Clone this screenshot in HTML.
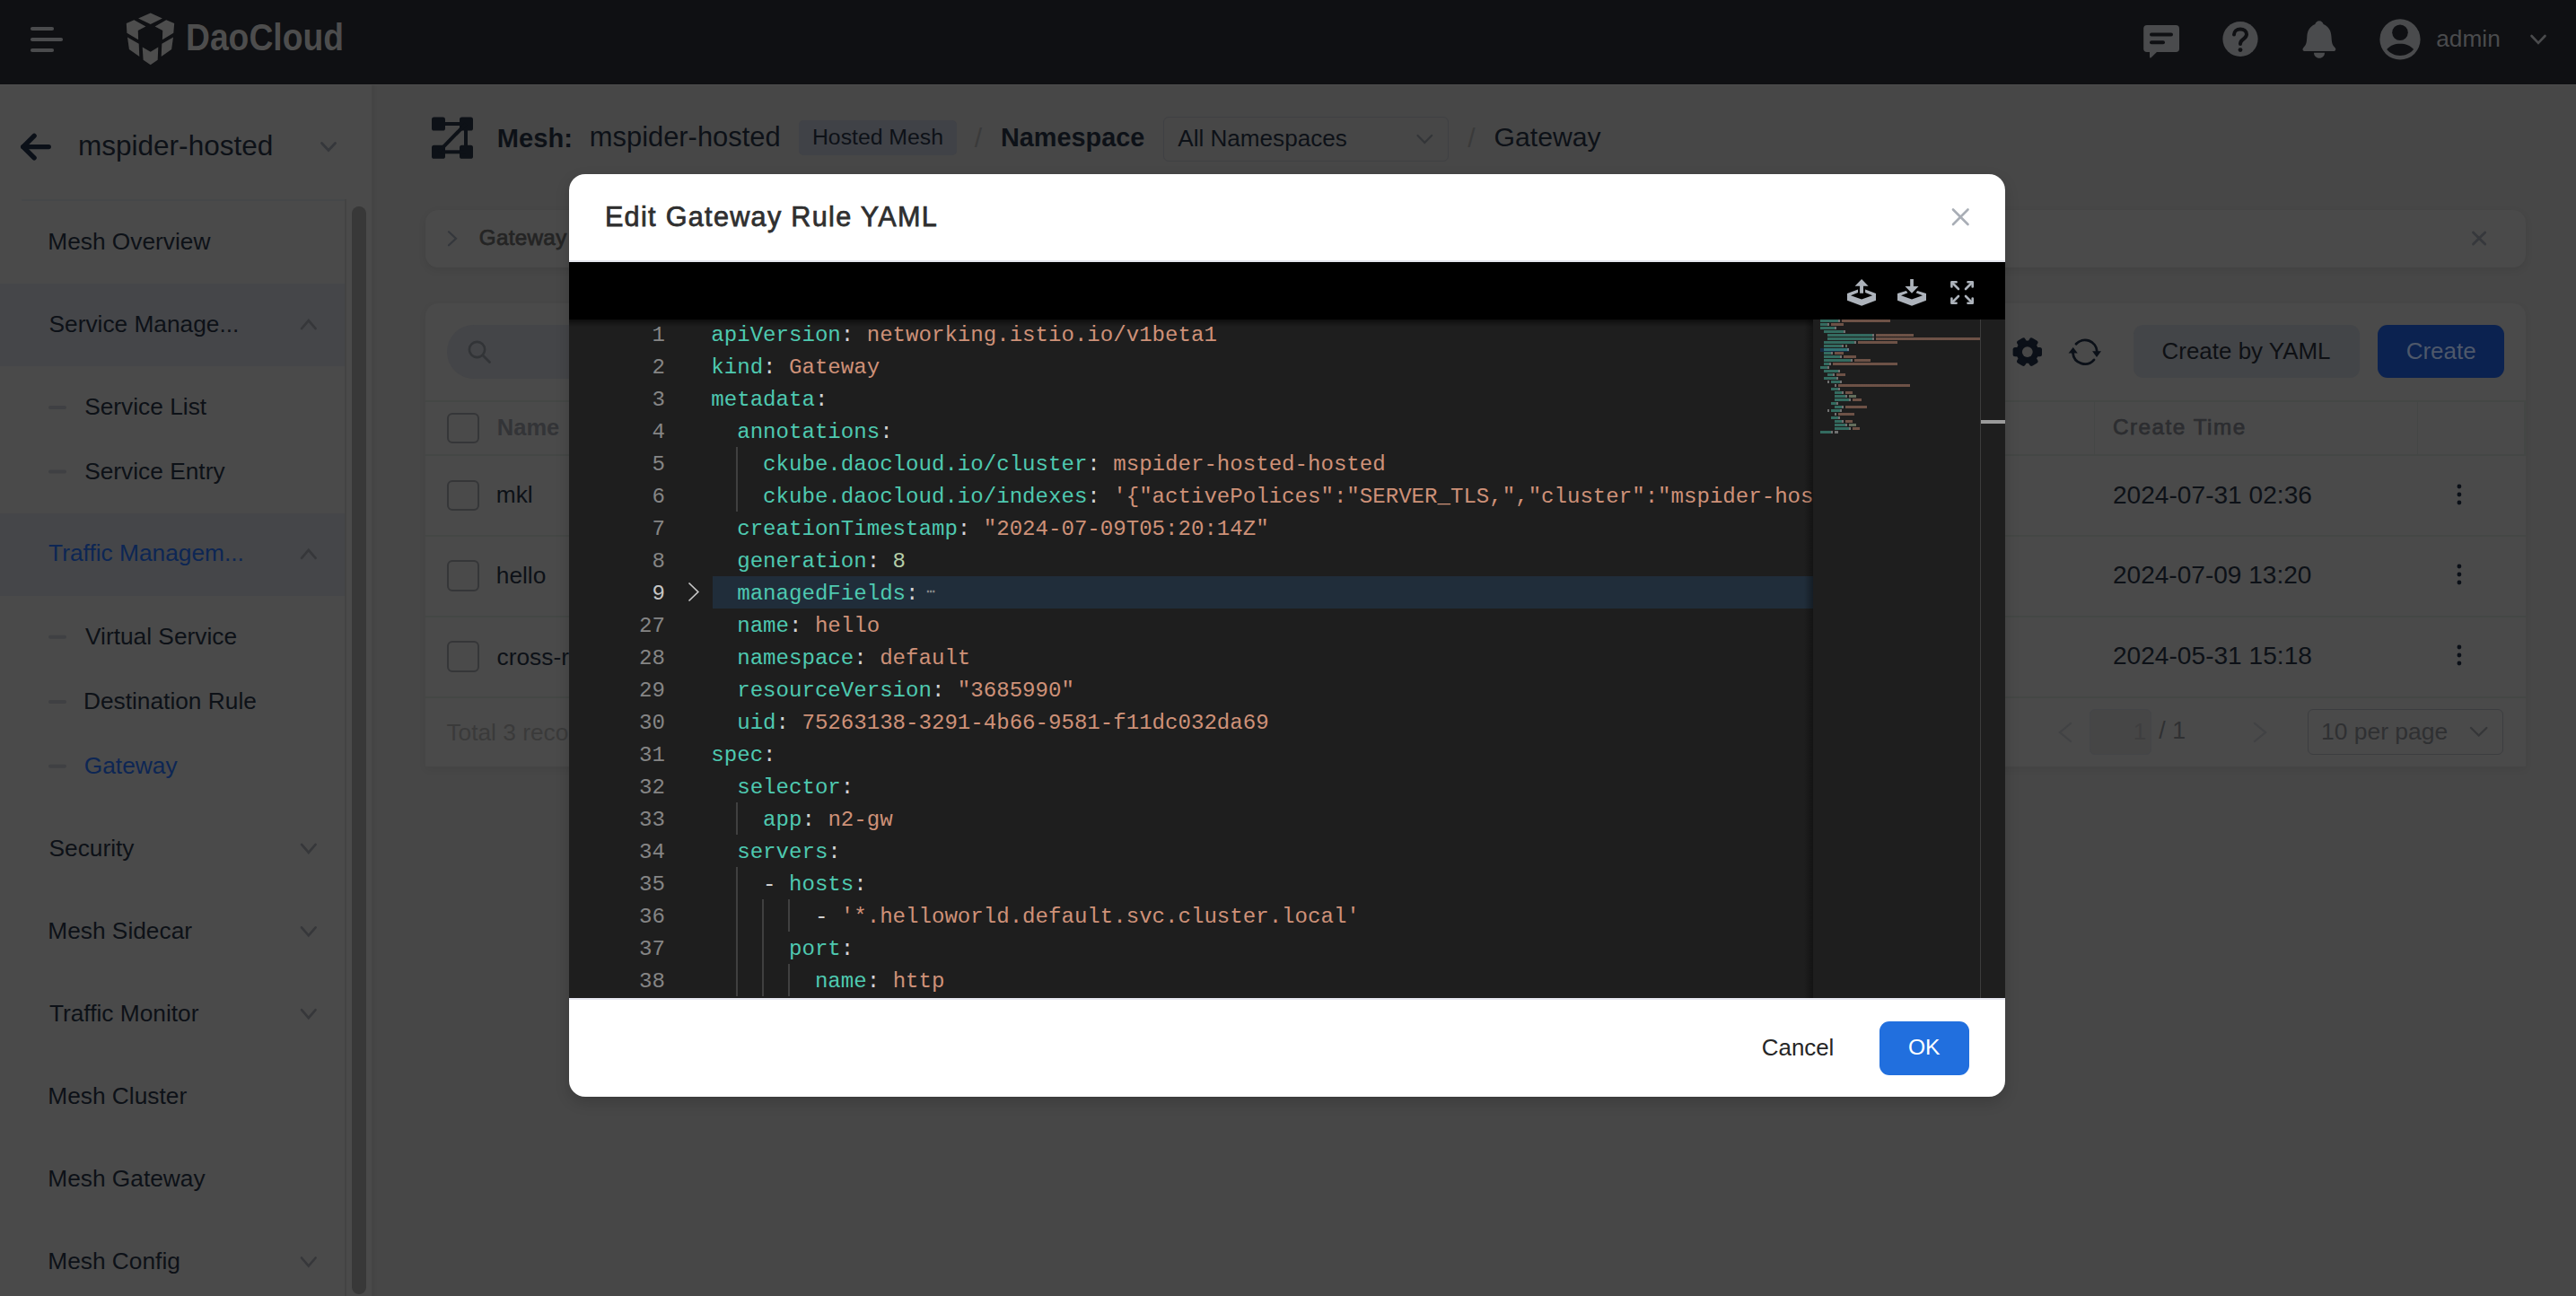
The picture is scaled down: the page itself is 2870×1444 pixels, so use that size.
<!DOCTYPE html>
<html><head><meta charset="utf-8"><title>Edit Gateway Rule YAML</title><style>
html,body{margin:0;padding:0;width:2870px;height:1444px;overflow:hidden;background:#474747;position:relative}
.t{position:absolute;white-space:pre}
.cl{position:absolute;white-space:pre;font-family:'Liberation Mono',monospace;font-size:24.08px;line-height:36px;margin-top:1.58px}
.ln{position:absolute;left:0;width:107px;text-align:right;font-family:'Liberation Mono',monospace;font-size:24.08px;line-height:36px;margin-top:1.58px}
</style></head>
<body>
<div style="position:absolute;left:0;top:0;width:2870px;height:94px;background:#0f1013"></div>
<svg style="position:absolute;left:0;top:0" width="420" height="94">
<g stroke="#4a4b4d" stroke-width="4.2" stroke-linecap="round">
<line x1="36" y1="32" x2="58" y2="32"/><line x1="36" y1="44" x2="68" y2="44"/><line x1="36" y1="56" x2="58" y2="56"/></g>
<g fill="#4d4d4d">
<polygon points="167.7,14.6 180.9,20.4 167.7,26.9 154.1,20.4"/>
<polygon points="140.8,26 149.4,22.3 162.4,29.4 153.8,34 154.1,44.2 141.4,36.8"/>
<polygon points="194.2,26 185.2,22.3 172.6,29.4 181.2,34 180.9,44.2 193.3,36.8"/>
<polygon points="142,41.4 154.7,48.8 155.3,63 143.9,55"/>
<polygon points="193,41.4 180.3,48.8 179.7,63 191.1,55"/>
<polygon points="158.7,52.5 167.7,57.8 176.3,52.5 175.7,66.7 167.7,72.3 159.6,66.7"/>
</g></svg>
<svg style="position:absolute;left:2370px;top:0" width="500" height="94" viewBox="2370 0 500 94">
<g fill="#4a4b4d">
<rect x="2388.2" y="28" width="39.8" height="30" rx="3.8"/>
<path d="M2395,56 L2395,63.2 Q2395,65.5 2396.8,63.9 L2405,56 Z"/>
<circle cx="2496" cy="43.5" r="19.6"/>
<path d="M2584,23.2 C2581.4,23.2 2580,25 2579.3,27 C2573,29.5 2570.5,35 2570.3,41 C2570,47 2569.5,50 2566.4,53 C2564.8,54.6 2565.4,57 2567.8,57 L2600,57 C2602.4,57 2603,54.6 2601.4,53 C2598.3,50 2597.8,47 2597.5,41 C2597.3,35 2594.8,29.5 2588.6,27 C2587.9,25 2586.5,23.2 2584,23.2 Z"/>
<path d="M2578,58.8 L2590,58.8 C2590,62.4 2587.4,64.8 2584,64.8 C2580.6,64.8 2578,62.4 2578,58.8 Z"/>
<circle cx="2674" cy="43.9" r="22.6"/>
</g>
<g stroke="#0f1013" stroke-width="4" stroke-linecap="round" fill="none">
<line x1="2397" y1="38.6" x2="2419" y2="38.6"/><line x1="2397" y1="47.3" x2="2410" y2="47.3"/>
<path d="M2489,38.6 C2489,35 2492,32.4 2496,32.4 C2500,32.4 2503,35 2503,38.3 C2503,41.3 2500.5,42.8 2498.5,44.3 C2496.5,45.8 2496,47 2496,49"/>
</g>
<circle cx="2496" cy="55.6" r="2.4" fill="#0f1013"/>
<circle cx="2674" cy="36.3" r="8.8" fill="#0f1013"/>
<path d="M2659.2,55.1 C2663,50.5 2668,48.7 2674,48.7 C2680,48.7 2685.3,50.5 2689.1,55.1 C2685.5,59.5 2680,62 2674,62 C2668,62 2662.7,59.5 2659.2,55.1 Z" fill="#0f1013"/>
<polyline points="2820.5,40 2828,47.8 2835.5,40" stroke="#4a4b4d" stroke-width="2.6" fill="none" stroke-linecap="round"/>
</svg>
<div style="position:absolute;left:0;top:94px;width:414px;height:1350px;background:#4a4a4a"></div>
<div style="position:absolute;left:414px;top:94px;width:2456px;height:1350px;background:#474747"></div>
<div style="position:absolute;left:414px;top:94px;width:3px;height:1350px;background:#444444"></div><div style="position:absolute;left:417px;top:94px;width:3px;height:1350px;background:#464646"></div><div style="position:absolute;left:0;top:94px;width:2870px;height:1px;background:#4e4e4e"></div>
<div style="position:absolute;left:0;top:316px;width:385px;height:92px;background:#454649"></div>
<div style="position:absolute;left:0;top:572px;width:385px;height:92px;background:#454649"></div>
<div style="position:absolute;left:24px;top:222px;width:361px;height:2px;background:#454749"></div>
<div style="position:absolute;left:384px;top:222px;width:2px;height:1222px;background:#434343"></div>
<div style="position:absolute;left:392px;top:230px;width:16px;height:1212px;border-radius:8px;background:#383838"></div>
<svg style="position:absolute;left:0;top:120px" width="414" height="100" viewBox="0 120 414 100">
<g stroke="#0b1018" stroke-width="5.4" stroke-linecap="round" stroke-linejoin="round" fill="none">
<polyline points="38.1,151.3 25.8,163.6 38.1,175.9"/><line x1="25.8" y1="163.6" x2="54.2" y2="163.6"/></g>
<polyline points="358.5,159.5 366,167.5 373.5,159.5" stroke="#35373b" stroke-width="2.8" fill="none" stroke-linecap="round"/>
</svg>
<svg style="position:absolute;left:0;top:0" width="414" height="1444">
<polyline points="336,366.09999999999997 343.8,357.09999999999997 351.6,366.09999999999997" stroke="#36373a" stroke-width="2.6" fill="none" stroke-linecap="round"/>
<line x1="56" y1="454.0" x2="72" y2="454.0" stroke="#3f4043" stroke-width="4" stroke-linecap="round"/>
<line x1="56" y1="525.5" x2="72" y2="525.5" stroke="#3f4043" stroke-width="4" stroke-linecap="round"/>
<polyline points="336,621.8000000000001 343.8,612.8000000000001 351.6,621.8000000000001" stroke="#36373a" stroke-width="2.6" fill="none" stroke-linecap="round"/>
<line x1="56" y1="709.8000000000001" x2="72" y2="709.8000000000001" stroke="#3f4043" stroke-width="4" stroke-linecap="round"/>
<line x1="56" y1="782.0" x2="72" y2="782.0" stroke="#3f4043" stroke-width="4" stroke-linecap="round"/>
<line x1="56" y1="853.7" x2="72" y2="853.7" stroke="#3f4043" stroke-width="4" stroke-linecap="round"/>
<polyline points="336,940.9000000000001 343.8,949.9000000000001 351.6,940.9000000000001" stroke="#36373a" stroke-width="2.6" fill="none" stroke-linecap="round"/>
<polyline points="336,1033.3 343.8,1042.3 351.6,1033.3" stroke="#36373a" stroke-width="2.6" fill="none" stroke-linecap="round"/>
<polyline points="336,1125.2 343.8,1134.2 351.6,1125.2" stroke="#36373a" stroke-width="2.6" fill="none" stroke-linecap="round"/>
<polyline points="336,1401.5 343.8,1410.5 351.6,1401.5" stroke="#36373a" stroke-width="2.6" fill="none" stroke-linecap="round"/>
</svg>
<svg style="position:absolute;left:470px;top:120px" width="70" height="70" viewBox="470 120 70 70">
<g fill="#0d1117"><rect x="481" y="130.6" width="15" height="15" rx="2.6"/><rect x="512" y="130.6" width="15" height="15" rx="2.6"/>
<rect x="481" y="161.8" width="15" height="15" rx="2.6"/><rect x="512" y="161.8" width="15" height="15" rx="2.6"/></g>
<g stroke="#0d1117" stroke-width="4" fill="none"><line x1="490" y1="138" x2="519" y2="138"/><line x1="490" y1="169.3" x2="519" y2="169.3"/>
<line x1="519" y1="138" x2="519" y2="169"/><line x1="519" y1="138" x2="488.5" y2="169.3"/></g></svg>
<div style="position:absolute;left:890px;top:134.2px;width:176px;height:39.3px;border-radius:5px;background:#404247"></div>
<div style="position:absolute;left:1295.7px;top:129.5px;width:318.4px;height:50.5px;box-sizing:border-box;border:1.6px solid #3f4043;border-radius:6px"></div>
<svg style="position:absolute;left:1570px;top:140px" width="40" height="30" viewBox="1570 140 40 30"><polyline points="1579.5,151 1587.3,159 1595.1,151" stroke="#333538" stroke-width="2.2" fill="none" stroke-linecap="round"/></svg>
<div style="position:absolute;left:474px;top:234px;width:2340px;height:64px;border-radius:14px;background:#4a4a4a;box-shadow:0 3px 8px rgba(0,0,0,0.08)"></div>
<svg style="position:absolute;left:490px;top:250px" width="30" height="30" viewBox="490 250 30 30"><polyline points="500,258.3 508,265.8 500,273.3" stroke="#34373c" stroke-width="2.2" fill="none" stroke-linecap="round"/></svg>
<svg style="position:absolute;left:2740px;top:245px" width="40" height="40" viewBox="2740 245 40 40"><g stroke="#36383c" stroke-width="2.8" stroke-linecap="round"><line x1="2755.5" y1="259" x2="2768.7" y2="272"/><line x1="2768.7" y1="259" x2="2755.5" y2="272"/></g></svg>
<div style="position:absolute;left:474px;top:338px;width:2340px;height:515.5px;border-radius:14px 14px 0 0;background:#4a4a4a;box-shadow:0 3px 8px rgba(0,0,0,0.06)"></div>
<div style="position:absolute;left:497.8px;top:361.7px;width:400px;height:60.2px;border-radius:30px;background:#444548"></div>
<svg style="position:absolute;left:515px;top:372px" width="40" height="40" viewBox="515 372 40 40"><circle cx="531.5" cy="389.5" r="8.6" stroke="#323437" stroke-width="2.6" fill="none"/><line x1="538" y1="396" x2="545.5" y2="403.5" stroke="#323437" stroke-width="2.8" stroke-linecap="round"/></svg>
<div style="position:absolute;left:474px;top:446px;width:2340px;height:2px;background:#444745"></div>
<div style="position:absolute;left:474px;top:506px;width:2340px;height:2px;background:#444745"></div>
<div style="position:absolute;left:474px;top:596px;width:2340px;height:2px;background:#444745"></div>
<div style="position:absolute;left:474px;top:686px;width:2340px;height:2px;background:#444745"></div>
<div style="position:absolute;left:474px;top:776px;width:2340px;height:2px;background:#444745"></div>
<div style="position:absolute;left:2332.5px;top:446px;width:1.5px;height:61px;background:#444745"></div>
<div style="position:absolute;left:2692.5px;top:446px;width:1.5px;height:61px;background:#444745"></div>
<div style="position:absolute;left:2812.3px;top:446px;width:1.5px;height:61px;background:#444745"></div>
<div style="position:absolute;left:498.3px;top:459.7px;width:35.3px;height:34.7px;box-sizing:border-box;border:2px solid #353638;border-radius:6px"></div>
<div style="position:absolute;left:498.3px;top:534.5px;width:35.3px;height:34.7px;box-sizing:border-box;border:2px solid #353638;border-radius:6px"></div>
<div style="position:absolute;left:498.3px;top:624.4px;width:35.3px;height:34.7px;box-sizing:border-box;border:2px solid #353638;border-radius:6px"></div>
<div style="position:absolute;left:498.3px;top:714.2px;width:35.3px;height:34.7px;box-sizing:border-box;border:2px solid #353638;border-radius:6px"></div>
<svg style="position:absolute;left:2236px;top:366px" width="114" height="52" viewBox="2236 366 114 52">
<g fill="#0b1018">
<circle cx="2258.8" cy="392.1" r="12.6"/>
<g transform="translate(2258.8 392.1)">
<rect x="-5.2" y="-16.2" width="10.4" height="8" rx="2.5" transform="rotate(-30)"/>
<rect x="-5.2" y="-16.2" width="10.4" height="8" rx="2.5" transform="rotate(30)"/>
<rect x="-5.2" y="-16.2" width="10.4" height="8" rx="2.5" transform="rotate(90)"/>
<rect x="-5.2" y="-16.2" width="10.4" height="8" rx="2.5" transform="rotate(150)"/>
<rect x="-5.2" y="-16.2" width="10.4" height="8" rx="2.5" transform="rotate(210)"/>
<rect x="-5.2" y="-16.2" width="10.4" height="8" rx="2.5" transform="rotate(270)"/>
</g></g>
<circle cx="2258.8" cy="392.1" r="5.9" fill="#474747"/>
<g stroke="#0b1018" stroke-width="2.8" fill="none" stroke-linecap="round">
<path d="M2313,383.3 A13.4,13.4 0 0 1 2336.3,391.6"/>
<path d="M2333,400.9 A13.4,13.4 0 0 1 2309.5,393.4"/>
</g>
<g fill="#0b1018">
<polygon points="2331.1,391.2 2341,391.2 2336,397.9"/>
<polygon points="2304.6,393.6 2314.8,393.6 2309.7,386.9"/>
</g></svg>
<div style="position:absolute;left:2377.2px;top:361.9px;width:251.6px;height:59.6px;border-radius:11px;background:#434548"></div>
<div style="position:absolute;left:2649.3px;top:361.9px;width:140.4px;height:59.6px;border-radius:11px;background:#0b2250"></div>
<svg style="position:absolute;left:2730px;top:535.5999999999999px" width="20" height="30"><g fill="#0b1018"><circle cx="9.9" cy="6" r="2.4"/><circle cx="9.9" cy="15" r="2.4"/><circle cx="9.9" cy="24" r="2.4"/></g></svg>
<svg style="position:absolute;left:2730px;top:625.0999999999999px" width="20" height="30"><g fill="#0b1018"><circle cx="9.9" cy="6" r="2.4"/><circle cx="9.9" cy="15" r="2.4"/><circle cx="9.9" cy="24" r="2.4"/></g></svg>
<svg style="position:absolute;left:2730px;top:715.3px" width="20" height="30"><g fill="#0b1018"><circle cx="9.9" cy="6" r="2.4"/><circle cx="9.9" cy="15" r="2.4"/><circle cx="9.9" cy="24" r="2.4"/></g></svg>
<svg style="position:absolute;left:2280px;top:790px" width="260" height="52" viewBox="2280 790 260 52"><polyline points="2307,806 2295,816 2307,826" stroke="#414244" stroke-width="2.2" fill="none" stroke-linecap="round"/><polyline points="2512,806 2524,816 2512,826" stroke="#414244" stroke-width="2.2" fill="none" stroke-linecap="round"/></svg>
<div style="position:absolute;left:2328.3px;top:790.4px;width:69.2px;height:50.7px;box-sizing:border-box;border:1.5px solid #444548;border-radius:6px;background:#464646"></div>
<div style="position:absolute;left:2570.8px;top:790.4px;width:218.5px;height:50.7px;box-sizing:border-box;border:1.6px solid #3c3d40;border-radius:6px"></div>
<svg style="position:absolute;left:2745px;top:800px" width="30" height="30" viewBox="2745 800 30 30"><polyline points="2753,811 2761.7,819.5 2770.4,811" stroke="#353638" stroke-width="2.2" fill="none" stroke-linecap="round"/></svg>
<div style="position:absolute;left:0;top:0;width:2870px;height:1444px;z-index:10">
<div style="position:absolute;left:634px;top:194px;width:1600px;height:1028px;border-radius:18px;background:#fff;box-shadow:0 6px 16px rgba(0,0,0,0.16);overflow:hidden">
<div style="position:absolute;left:0;top:96px;width:1600px;height:2px;background:#e4e6ee"></div>
<div style="position:absolute;left:0;top:98px;width:1600px;height:64px;background:#000"></div>
<div id="ed" style="position:absolute;left:0;top:162px;width:1600px;height:756px;background:#1e1e1e;overflow:hidden"></div>
<div style="position:absolute;left:0;top:918px;width:1600px;height:2px;background:#e6e7f0"></div>
</div>
<svg style="position:absolute;left:2165px;top:223px" width="40" height="40" viewBox="2165 223 40 40"><g stroke="#a9aeb6" stroke-width="2.6" stroke-linecap="round"><line x1="2176" y1="233.5" x2="2192.5" y2="250"/><line x1="2192.5" y1="233.5" x2="2176" y2="250"/></g></svg>
<div style="position:absolute;left:2094.1px;top:1137.9px;width:99.6px;height:59.8px;border-radius:11px;background:#216fde"></div>
<svg style="position:absolute;left:2040px;top:300px" width="180" height="50" viewBox="2040 300 180 50"><g fill="#adb3bb">
<polygon points="2074.1,311.1 2081.6,318.8 2076,318.8 2076,326.8 2072.1,326.8 2072.1,318.8 2066.6,318.8"/>
<path d="M2070,322.6 L2070,326 L2062,329.2 L2074.1,333.6 L2086.1,329.2 L2078.1,326 L2078.1,322.6 L2090,327.1 L2090,334.8 L2074.1,340.8 L2058,334.8 L2058,327.1 Z"/>
<polygon points="2128.2,311.1 2131.9,311.1 2131.9,319.1 2137.5,319.1 2130,326.8 2122.5,319.1 2128.2,319.1"/>
<path d="M2123.8,324 L2125.5,326.2 L2118,329.2 L2130,333.6 L2142,329.2 L2134.5,326.2 L2136.2,324 L2146,327.1 L2146,334.8 L2130,340.8 L2114,334.8 L2114,327.1 Z"/>
</g>
<g stroke="#adb3bb" stroke-width="2.6" stroke-linecap="round" stroke-linejoin="round" fill="none">
<polyline points="2174.4,319.5 2174.4,314.3 2179.6,314.3"/><line x1="2175" y1="315" x2="2182" y2="322"/>
<polyline points="2192.5,314.3 2197.7,314.3 2197.7,319.5"/><line x1="2197" y1="315" x2="2190" y2="322"/>
<polyline points="2174.4,332.5 2174.4,337.7 2179.6,337.7"/><line x1="2175" y1="337" x2="2182" y2="330"/>
<polyline points="2192.5,337.7 2197.7,337.7 2197.7,332.5"/><line x1="2197" y1="337" x2="2190" y2="330"/>
</g></svg>
<div style="position:absolute;left:634px;top:356px;width:1386px;height:8px;background:linear-gradient(#000,rgba(0,0,0,0));opacity:0.55"></div>
<div style="position:absolute;left:794px;top:642px;width:1226px;height:36px;background:#202d3a"></div>
<div style="position:absolute;left:820.4px;top:498px;width:1.6px;height:36px;background:#404040"></div>
<div style="position:absolute;left:820.4px;top:534px;width:1.6px;height:36px;background:#404040"></div>
<div style="position:absolute;left:820.4px;top:894px;width:1.6px;height:36px;background:#404040"></div>
<div style="position:absolute;left:820.4px;top:966px;width:1.6px;height:36px;background:#404040"></div>
<div style="position:absolute;left:820.4px;top:1002px;width:1.6px;height:36px;background:#404040"></div>
<div style="position:absolute;left:820.4px;top:1038px;width:1.6px;height:36px;background:#404040"></div>
<div style="position:absolute;left:820.4px;top:1074px;width:1.6px;height:36px;background:#404040"></div>
<div style="position:absolute;left:849.3px;top:1002px;width:1.6px;height:36px;background:#404040"></div>
<div style="position:absolute;left:849.3px;top:1038px;width:1.6px;height:36px;background:#404040"></div>
<div style="position:absolute;left:849.3px;top:1074px;width:1.6px;height:36px;background:#404040"></div>
<div style="position:absolute;left:878.2px;top:1002px;width:1.6px;height:36px;background:#404040"></div>
<div style="position:absolute;left:878.2px;top:1074px;width:1.6px;height:36px;background:#404040"></div>
<div style="position:absolute;left:634px;top:354px;width:1386px;height:760px;overflow:hidden;clip-path:inset(2px 0 0 0)">
<div class="cl" style="top:0px;left:158.3px"><span style="color:#d4d4d4"></span><span style="color:#4ec9b0">apiVersion</span><span style="color:#d4d4d4">:</span><span style="color:#d4d4d4"> </span><span style="color:#ce9178">networking.istio.io/v1beta1</span></div>
<div class="ln" style="top:0px;color:#858585">1</div>
<div class="cl" style="top:36px;left:158.3px"><span style="color:#d4d4d4"></span><span style="color:#4ec9b0">kind</span><span style="color:#d4d4d4">:</span><span style="color:#d4d4d4"> </span><span style="color:#ce9178">Gateway</span></div>
<div class="ln" style="top:36px;color:#858585">2</div>
<div class="cl" style="top:72px;left:158.3px"><span style="color:#d4d4d4"></span><span style="color:#4ec9b0">metadata</span><span style="color:#d4d4d4">:</span></div>
<div class="ln" style="top:72px;color:#858585">3</div>
<div class="cl" style="top:108px;left:158.3px"><span style="color:#d4d4d4">  </span><span style="color:#4ec9b0">annotations</span><span style="color:#d4d4d4">:</span></div>
<div class="ln" style="top:108px;color:#858585">4</div>
<div class="cl" style="top:144px;left:158.3px"><span style="color:#d4d4d4">    </span><span style="color:#4ec9b0">ckube.daocloud.io/cluster</span><span style="color:#d4d4d4">:</span><span style="color:#d4d4d4"> </span><span style="color:#ce9178">mspider-hosted-hosted</span></div>
<div class="ln" style="top:144px;color:#858585">5</div>
<div class="cl" style="top:180px;left:158.3px"><span style="color:#d4d4d4">    </span><span style="color:#4ec9b0">ckube.daocloud.io/indexes</span><span style="color:#d4d4d4">:</span><span style="color:#d4d4d4"> </span><span style="color:#ce9178">&#x27;{&quot;activePolices&quot;:&quot;SERVER_TLS,&quot;,&quot;cluster&quot;:&quot;mspider-hosted-hosted&quot;,&quot;gateway&quot;:&quot;hello&quot;}&#x27;</span></div>
<div class="ln" style="top:180px;color:#858585">6</div>
<div class="cl" style="top:216px;left:158.3px"><span style="color:#d4d4d4">  </span><span style="color:#4ec9b0">creationTimestamp</span><span style="color:#d4d4d4">:</span><span style="color:#d4d4d4"> </span><span style="color:#ce9178">&quot;2024-07-09T05:20:14Z&quot;</span></div>
<div class="ln" style="top:216px;color:#858585">7</div>
<div class="cl" style="top:252px;left:158.3px"><span style="color:#d4d4d4">  </span><span style="color:#4ec9b0">generation</span><span style="color:#d4d4d4">:</span><span style="color:#d4d4d4"> </span><span style="color:#b5cea8">8</span></div>
<div class="ln" style="top:252px;color:#858585">8</div>
<div class="cl" style="top:288px;left:158.3px"><span style="color:#d4d4d4">  </span><span style="color:#4ec9b0">managedFields</span><span style="color:#d4d4d4">:</span><span style="color:#8c8c8c;font-size:16px;letter-spacing:-1px;position:relative;top:-4px">&nbsp;&#8943;</span></div>
<div class="ln" style="top:288px;color:#c6c6c6">9</div>
<div class="cl" style="top:324px;left:158.3px"><span style="color:#d4d4d4">  </span><span style="color:#4ec9b0">name</span><span style="color:#d4d4d4">:</span><span style="color:#d4d4d4"> </span><span style="color:#ce9178">hello</span></div>
<div class="ln" style="top:324px;color:#858585">27</div>
<div class="cl" style="top:360px;left:158.3px"><span style="color:#d4d4d4">  </span><span style="color:#4ec9b0">namespace</span><span style="color:#d4d4d4">:</span><span style="color:#d4d4d4"> </span><span style="color:#ce9178">default</span></div>
<div class="ln" style="top:360px;color:#858585">28</div>
<div class="cl" style="top:396px;left:158.3px"><span style="color:#d4d4d4">  </span><span style="color:#4ec9b0">resourceVersion</span><span style="color:#d4d4d4">:</span><span style="color:#d4d4d4"> </span><span style="color:#ce9178">&quot;3685990&quot;</span></div>
<div class="ln" style="top:396px;color:#858585">29</div>
<div class="cl" style="top:432px;left:158.3px"><span style="color:#d4d4d4">  </span><span style="color:#4ec9b0">uid</span><span style="color:#d4d4d4">:</span><span style="color:#d4d4d4"> </span><span style="color:#ce9178">75263138-3291-4b66-9581-f11dc032da69</span></div>
<div class="ln" style="top:432px;color:#858585">30</div>
<div class="cl" style="top:468px;left:158.3px"><span style="color:#d4d4d4"></span><span style="color:#4ec9b0">spec</span><span style="color:#d4d4d4">:</span></div>
<div class="ln" style="top:468px;color:#858585">31</div>
<div class="cl" style="top:504px;left:158.3px"><span style="color:#d4d4d4">  </span><span style="color:#4ec9b0">selector</span><span style="color:#d4d4d4">:</span></div>
<div class="ln" style="top:504px;color:#858585">32</div>
<div class="cl" style="top:540px;left:158.3px"><span style="color:#d4d4d4">    </span><span style="color:#4ec9b0">app</span><span style="color:#d4d4d4">:</span><span style="color:#d4d4d4"> </span><span style="color:#ce9178">n2-gw</span></div>
<div class="ln" style="top:540px;color:#858585">33</div>
<div class="cl" style="top:576px;left:158.3px"><span style="color:#d4d4d4">  </span><span style="color:#4ec9b0">servers</span><span style="color:#d4d4d4">:</span></div>
<div class="ln" style="top:576px;color:#858585">34</div>
<div class="cl" style="top:612px;left:158.3px"><span style="color:#d4d4d4">    </span><span style="color:#d4d4d4">- </span><span style="color:#4ec9b0">hosts</span><span style="color:#d4d4d4">:</span></div>
<div class="ln" style="top:612px;color:#858585">35</div>
<div class="cl" style="top:648px;left:158.3px"><span style="color:#d4d4d4">        </span><span style="color:#d4d4d4">- </span><span style="color:#ce9178">&#x27;*.helloworld.default.svc.cluster.local&#x27;</span></div>
<div class="ln" style="top:648px;color:#858585">36</div>
<div class="cl" style="top:684px;left:158.3px"><span style="color:#d4d4d4">      </span><span style="color:#4ec9b0">port</span><span style="color:#d4d4d4">:</span></div>
<div class="ln" style="top:684px;color:#858585">37</div>
<div class="cl" style="top:720px;left:158.3px"><span style="color:#d4d4d4">        </span><span style="color:#4ec9b0">name</span><span style="color:#d4d4d4">:</span><span style="color:#d4d4d4"> </span><span style="color:#ce9178">http</span></div>
<div class="ln" style="top:720px;color:#858585">38</div>
</div>
<svg style="position:absolute;left:760px;top:640px" width="30" height="40" viewBox="760 640 30 40"><polyline points="767.5,649.5 777.8,659.5 767.5,669.5" stroke="#c5c5c5" stroke-width="1.7" fill="none"/></svg>
<div style="position:absolute;left:2020px;top:356px;width:187px;height:756px;overflow:hidden">
<div style="position:absolute;left:8px;top:0.3px;width:20px;height:3px;background:repeating-linear-gradient(90deg,#4ec9b0 0 1.7px,transparent 1.7px 2px);opacity:0.45"></div>
<div style="position:absolute;left:28px;top:0.3px;width:2px;height:3px;background:repeating-linear-gradient(90deg,#d4d4d4 0 1.7px,transparent 1.7px 2px);opacity:0.45"></div>
<div style="position:absolute;left:32px;top:0.3px;width:54px;height:3px;background:repeating-linear-gradient(90deg,#ce9178 0 1.7px,transparent 1.7px 2px);opacity:0.45"></div>
<div style="position:absolute;left:8px;top:4.3px;width:8px;height:3px;background:repeating-linear-gradient(90deg,#4ec9b0 0 1.7px,transparent 1.7px 2px);opacity:0.45"></div>
<div style="position:absolute;left:16px;top:4.3px;width:2px;height:3px;background:repeating-linear-gradient(90deg,#d4d4d4 0 1.7px,transparent 1.7px 2px);opacity:0.45"></div>
<div style="position:absolute;left:20px;top:4.3px;width:14px;height:3px;background:repeating-linear-gradient(90deg,#ce9178 0 1.7px,transparent 1.7px 2px);opacity:0.45"></div>
<div style="position:absolute;left:8px;top:8.3px;width:16px;height:3px;background:repeating-linear-gradient(90deg,#4ec9b0 0 1.7px,transparent 1.7px 2px);opacity:0.45"></div>
<div style="position:absolute;left:24px;top:8.3px;width:2px;height:3px;background:repeating-linear-gradient(90deg,#d4d4d4 0 1.7px,transparent 1.7px 2px);opacity:0.45"></div>
<div style="position:absolute;left:12px;top:12.3px;width:22px;height:3px;background:repeating-linear-gradient(90deg,#4ec9b0 0 1.7px,transparent 1.7px 2px);opacity:0.45"></div>
<div style="position:absolute;left:34px;top:12.3px;width:2px;height:3px;background:repeating-linear-gradient(90deg,#d4d4d4 0 1.7px,transparent 1.7px 2px);opacity:0.45"></div>
<div style="position:absolute;left:16px;top:16.3px;width:50px;height:3px;background:repeating-linear-gradient(90deg,#4ec9b0 0 1.7px,transparent 1.7px 2px);opacity:0.45"></div>
<div style="position:absolute;left:66px;top:16.3px;width:2px;height:3px;background:repeating-linear-gradient(90deg,#d4d4d4 0 1.7px,transparent 1.7px 2px);opacity:0.45"></div>
<div style="position:absolute;left:70px;top:16.3px;width:42px;height:3px;background:repeating-linear-gradient(90deg,#ce9178 0 1.7px,transparent 1.7px 2px);opacity:0.45"></div>
<div style="position:absolute;left:16px;top:20.3px;width:50px;height:3px;background:repeating-linear-gradient(90deg,#4ec9b0 0 1.7px,transparent 1.7px 2px);opacity:0.45"></div>
<div style="position:absolute;left:66px;top:20.3px;width:2px;height:3px;background:repeating-linear-gradient(90deg,#d4d4d4 0 1.7px,transparent 1.7px 2px);opacity:0.45"></div>
<div style="position:absolute;left:70px;top:20.3px;width:170px;height:3px;background:repeating-linear-gradient(90deg,#ce9178 0 1.7px,transparent 1.7px 2px);opacity:0.45"></div>
<div style="position:absolute;left:12px;top:24.3px;width:34px;height:3px;background:repeating-linear-gradient(90deg,#4ec9b0 0 1.7px,transparent 1.7px 2px);opacity:0.45"></div>
<div style="position:absolute;left:46px;top:24.3px;width:2px;height:3px;background:repeating-linear-gradient(90deg,#d4d4d4 0 1.7px,transparent 1.7px 2px);opacity:0.45"></div>
<div style="position:absolute;left:50px;top:24.3px;width:44px;height:3px;background:repeating-linear-gradient(90deg,#ce9178 0 1.7px,transparent 1.7px 2px);opacity:0.45"></div>
<div style="position:absolute;left:12px;top:28.3px;width:20px;height:3px;background:repeating-linear-gradient(90deg,#4ec9b0 0 1.7px,transparent 1.7px 2px);opacity:0.45"></div>
<div style="position:absolute;left:32px;top:28.3px;width:2px;height:3px;background:repeating-linear-gradient(90deg,#d4d4d4 0 1.7px,transparent 1.7px 2px);opacity:0.45"></div>
<div style="position:absolute;left:36px;top:28.3px;width:2px;height:3px;background:repeating-linear-gradient(90deg,#b5cea8 0 1.7px,transparent 1.7px 2px);opacity:0.45"></div>
<div style="position:absolute;left:8px;top:31.999999999999996px;width:32px;height:3.8px;background:#172b42"></div>
<div style="position:absolute;left:12px;top:32.3px;width:26px;height:3px;background:repeating-linear-gradient(90deg,#4ec9b0 0 1.7px,transparent 1.7px 2px);opacity:0.45"></div>
<div style="position:absolute;left:38px;top:32.3px;width:2px;height:3px;background:repeating-linear-gradient(90deg,#d4d4d4 0 1.7px,transparent 1.7px 2px);opacity:0.45"></div>
<div style="position:absolute;left:12px;top:36.3px;width:8px;height:3px;background:repeating-linear-gradient(90deg,#4ec9b0 0 1.7px,transparent 1.7px 2px);opacity:0.45"></div>
<div style="position:absolute;left:20px;top:36.3px;width:2px;height:3px;background:repeating-linear-gradient(90deg,#d4d4d4 0 1.7px,transparent 1.7px 2px);opacity:0.45"></div>
<div style="position:absolute;left:24px;top:36.3px;width:10px;height:3px;background:repeating-linear-gradient(90deg,#ce9178 0 1.7px,transparent 1.7px 2px);opacity:0.45"></div>
<div style="position:absolute;left:12px;top:40.3px;width:18px;height:3px;background:repeating-linear-gradient(90deg,#4ec9b0 0 1.7px,transparent 1.7px 2px);opacity:0.45"></div>
<div style="position:absolute;left:30px;top:40.3px;width:2px;height:3px;background:repeating-linear-gradient(90deg,#d4d4d4 0 1.7px,transparent 1.7px 2px);opacity:0.45"></div>
<div style="position:absolute;left:34px;top:40.3px;width:14px;height:3px;background:repeating-linear-gradient(90deg,#ce9178 0 1.7px,transparent 1.7px 2px);opacity:0.45"></div>
<div style="position:absolute;left:12px;top:44.3px;width:30px;height:3px;background:repeating-linear-gradient(90deg,#4ec9b0 0 1.7px,transparent 1.7px 2px);opacity:0.45"></div>
<div style="position:absolute;left:42px;top:44.3px;width:2px;height:3px;background:repeating-linear-gradient(90deg,#d4d4d4 0 1.7px,transparent 1.7px 2px);opacity:0.45"></div>
<div style="position:absolute;left:46px;top:44.3px;width:18px;height:3px;background:repeating-linear-gradient(90deg,#ce9178 0 1.7px,transparent 1.7px 2px);opacity:0.45"></div>
<div style="position:absolute;left:12px;top:48.3px;width:6px;height:3px;background:repeating-linear-gradient(90deg,#4ec9b0 0 1.7px,transparent 1.7px 2px);opacity:0.45"></div>
<div style="position:absolute;left:18px;top:48.3px;width:2px;height:3px;background:repeating-linear-gradient(90deg,#d4d4d4 0 1.7px,transparent 1.7px 2px);opacity:0.45"></div>
<div style="position:absolute;left:22px;top:48.3px;width:72px;height:3px;background:repeating-linear-gradient(90deg,#ce9178 0 1.7px,transparent 1.7px 2px);opacity:0.45"></div>
<div style="position:absolute;left:8px;top:52.3px;width:8px;height:3px;background:repeating-linear-gradient(90deg,#4ec9b0 0 1.7px,transparent 1.7px 2px);opacity:0.45"></div>
<div style="position:absolute;left:16px;top:52.3px;width:2px;height:3px;background:repeating-linear-gradient(90deg,#d4d4d4 0 1.7px,transparent 1.7px 2px);opacity:0.45"></div>
<div style="position:absolute;left:12px;top:56.3px;width:16px;height:3px;background:repeating-linear-gradient(90deg,#4ec9b0 0 1.7px,transparent 1.7px 2px);opacity:0.45"></div>
<div style="position:absolute;left:28px;top:56.3px;width:2px;height:3px;background:repeating-linear-gradient(90deg,#d4d4d4 0 1.7px,transparent 1.7px 2px);opacity:0.45"></div>
<div style="position:absolute;left:16px;top:60.3px;width:6px;height:3px;background:repeating-linear-gradient(90deg,#4ec9b0 0 1.7px,transparent 1.7px 2px);opacity:0.45"></div>
<div style="position:absolute;left:22px;top:60.3px;width:2px;height:3px;background:repeating-linear-gradient(90deg,#d4d4d4 0 1.7px,transparent 1.7px 2px);opacity:0.45"></div>
<div style="position:absolute;left:26px;top:60.3px;width:10px;height:3px;background:repeating-linear-gradient(90deg,#ce9178 0 1.7px,transparent 1.7px 2px);opacity:0.45"></div>
<div style="position:absolute;left:12px;top:64.3px;width:14px;height:3px;background:repeating-linear-gradient(90deg,#4ec9b0 0 1.7px,transparent 1.7px 2px);opacity:0.45"></div>
<div style="position:absolute;left:26px;top:64.3px;width:2px;height:3px;background:repeating-linear-gradient(90deg,#d4d4d4 0 1.7px,transparent 1.7px 2px);opacity:0.45"></div>
<div style="position:absolute;left:16px;top:68.3px;width:2px;height:3px;background:repeating-linear-gradient(90deg,#d4d4d4 0 1.7px,transparent 1.7px 2px);opacity:0.45"></div>
<div style="position:absolute;left:20px;top:68.3px;width:10px;height:3px;background:repeating-linear-gradient(90deg,#4ec9b0 0 1.7px,transparent 1.7px 2px);opacity:0.45"></div>
<div style="position:absolute;left:30px;top:68.3px;width:2px;height:3px;background:repeating-linear-gradient(90deg,#d4d4d4 0 1.7px,transparent 1.7px 2px);opacity:0.45"></div>
<div style="position:absolute;left:24px;top:72.3px;width:2px;height:3px;background:repeating-linear-gradient(90deg,#d4d4d4 0 1.7px,transparent 1.7px 2px);opacity:0.45"></div>
<div style="position:absolute;left:28px;top:72.3px;width:80px;height:3px;background:repeating-linear-gradient(90deg,#ce9178 0 1.7px,transparent 1.7px 2px);opacity:0.45"></div>
<div style="position:absolute;left:20px;top:76.3px;width:8px;height:3px;background:repeating-linear-gradient(90deg,#4ec9b0 0 1.7px,transparent 1.7px 2px);opacity:0.45"></div>
<div style="position:absolute;left:28px;top:76.3px;width:2px;height:3px;background:repeating-linear-gradient(90deg,#d4d4d4 0 1.7px,transparent 1.7px 2px);opacity:0.45"></div>
<div style="position:absolute;left:24px;top:80.3px;width:8px;height:3px;background:repeating-linear-gradient(90deg,#4ec9b0 0 1.7px,transparent 1.7px 2px);opacity:0.45"></div>
<div style="position:absolute;left:32px;top:80.3px;width:2px;height:3px;background:repeating-linear-gradient(90deg,#d4d4d4 0 1.7px,transparent 1.7px 2px);opacity:0.45"></div>
<div style="position:absolute;left:36px;top:80.3px;width:8px;height:3px;background:repeating-linear-gradient(90deg,#ce9178 0 1.7px,transparent 1.7px 2px);opacity:0.45"></div>
<div style="position:absolute;left:24px;top:84.3px;width:12px;height:3px;background:repeating-linear-gradient(90deg,#4ec9b0 0 1.7px,transparent 1.7px 2px);opacity:0.45"></div>
<div style="position:absolute;left:36px;top:84.3px;width:2px;height:3px;background:repeating-linear-gradient(90deg,#d4d4d4 0 1.7px,transparent 1.7px 2px);opacity:0.45"></div>
<div style="position:absolute;left:40px;top:84.3px;width:8px;height:3px;background:repeating-linear-gradient(90deg,#b5cea8 0 1.7px,transparent 1.7px 2px);opacity:0.45"></div>
<div style="position:absolute;left:24px;top:88.3px;width:16px;height:3px;background:repeating-linear-gradient(90deg,#4ec9b0 0 1.7px,transparent 1.7px 2px);opacity:0.45"></div>
<div style="position:absolute;left:40px;top:88.3px;width:2px;height:3px;background:repeating-linear-gradient(90deg,#d4d4d4 0 1.7px,transparent 1.7px 2px);opacity:0.45"></div>
<div style="position:absolute;left:44px;top:88.3px;width:10px;height:3px;background:repeating-linear-gradient(90deg,#ce9178 0 1.7px,transparent 1.7px 2px);opacity:0.45"></div>
<div style="position:absolute;left:20px;top:92.3px;width:6px;height:3px;background:repeating-linear-gradient(90deg,#4ec9b0 0 1.7px,transparent 1.7px 2px);opacity:0.45"></div>
<div style="position:absolute;left:26px;top:92.3px;width:2px;height:3px;background:repeating-linear-gradient(90deg,#d4d4d4 0 1.7px,transparent 1.7px 2px);opacity:0.45"></div>
<div style="position:absolute;left:24px;top:96.3px;width:8px;height:3px;background:repeating-linear-gradient(90deg,#4ec9b0 0 1.7px,transparent 1.7px 2px);opacity:0.45"></div>
<div style="position:absolute;left:32px;top:96.3px;width:2px;height:3px;background:repeating-linear-gradient(90deg,#d4d4d4 0 1.7px,transparent 1.7px 2px);opacity:0.45"></div>
<div style="position:absolute;left:36px;top:96.3px;width:24px;height:3px;background:repeating-linear-gradient(90deg,#ce9178 0 1.7px,transparent 1.7px 2px);opacity:0.45"></div>
<div style="position:absolute;left:16px;top:100.3px;width:2px;height:3px;background:repeating-linear-gradient(90deg,#d4d4d4 0 1.7px,transparent 1.7px 2px);opacity:0.45"></div>
<div style="position:absolute;left:20px;top:100.3px;width:10px;height:3px;background:repeating-linear-gradient(90deg,#4ec9b0 0 1.7px,transparent 1.7px 2px);opacity:0.45"></div>
<div style="position:absolute;left:30px;top:100.3px;width:2px;height:3px;background:repeating-linear-gradient(90deg,#d4d4d4 0 1.7px,transparent 1.7px 2px);opacity:0.45"></div>
<div style="position:absolute;left:24px;top:104.3px;width:2px;height:3px;background:repeating-linear-gradient(90deg,#d4d4d4 0 1.7px,transparent 1.7px 2px);opacity:0.45"></div>
<div style="position:absolute;left:28px;top:104.3px;width:18px;height:3px;background:repeating-linear-gradient(90deg,#ce9178 0 1.7px,transparent 1.7px 2px);opacity:0.45"></div>
<div style="position:absolute;left:20px;top:108.3px;width:8px;height:3px;background:repeating-linear-gradient(90deg,#4ec9b0 0 1.7px,transparent 1.7px 2px);opacity:0.45"></div>
<div style="position:absolute;left:28px;top:108.3px;width:2px;height:3px;background:repeating-linear-gradient(90deg,#d4d4d4 0 1.7px,transparent 1.7px 2px);opacity:0.45"></div>
<div style="position:absolute;left:24px;top:112.3px;width:8px;height:3px;background:repeating-linear-gradient(90deg,#4ec9b0 0 1.7px,transparent 1.7px 2px);opacity:0.45"></div>
<div style="position:absolute;left:32px;top:112.3px;width:2px;height:3px;background:repeating-linear-gradient(90deg,#d4d4d4 0 1.7px,transparent 1.7px 2px);opacity:0.45"></div>
<div style="position:absolute;left:36px;top:112.3px;width:8px;height:3px;background:repeating-linear-gradient(90deg,#ce9178 0 1.7px,transparent 1.7px 2px);opacity:0.45"></div>
<div style="position:absolute;left:24px;top:116.3px;width:12px;height:3px;background:repeating-linear-gradient(90deg,#4ec9b0 0 1.7px,transparent 1.7px 2px);opacity:0.45"></div>
<div style="position:absolute;left:36px;top:116.3px;width:2px;height:3px;background:repeating-linear-gradient(90deg,#d4d4d4 0 1.7px,transparent 1.7px 2px);opacity:0.45"></div>
<div style="position:absolute;left:40px;top:116.3px;width:8px;height:3px;background:repeating-linear-gradient(90deg,#b5cea8 0 1.7px,transparent 1.7px 2px);opacity:0.45"></div>
<div style="position:absolute;left:24px;top:120.3px;width:16px;height:3px;background:repeating-linear-gradient(90deg,#4ec9b0 0 1.7px,transparent 1.7px 2px);opacity:0.45"></div>
<div style="position:absolute;left:40px;top:120.3px;width:2px;height:3px;background:repeating-linear-gradient(90deg,#d4d4d4 0 1.7px,transparent 1.7px 2px);opacity:0.45"></div>
<div style="position:absolute;left:44px;top:120.3px;width:8px;height:3px;background:repeating-linear-gradient(90deg,#ce9178 0 1.7px,transparent 1.7px 2px);opacity:0.45"></div>
<div style="position:absolute;left:8px;top:124.3px;width:12px;height:3px;background:repeating-linear-gradient(90deg,#4ec9b0 0 1.7px,transparent 1.7px 2px);opacity:0.45"></div>
<div style="position:absolute;left:20px;top:124.3px;width:2px;height:3px;background:repeating-linear-gradient(90deg,#d4d4d4 0 1.7px,transparent 1.7px 2px);opacity:0.45"></div>
<div style="position:absolute;left:24px;top:124.3px;width:4px;height:3px;background:repeating-linear-gradient(90deg,#d4d4d4 0 1.7px,transparent 1.7px 2px);opacity:0.45"></div>
</div>
<div style="position:absolute;left:2010px;top:356px;width:10px;height:756px;background:linear-gradient(90deg,rgba(0,0,0,0),rgba(0,0,0,0.35))"></div>
<div style="position:absolute;left:2206px;top:356px;width:1.4px;height:756px;background:#3c3c3c"></div>
<div style="position:absolute;left:2207.4px;top:468px;width:26.6px;height:4px;background:#9a9a9a"></div>
</div>
<div class="t" style="z-index:0;left:206.57px;top:14.37px;font-size:42.50px;line-height:55px;font-weight:bold;color:#4d4d4d;font-family:'Liberation Sans',sans-serif;transform:scaleX(0.8766);transform-origin:0 0;">DaoCloud</div>
<div class="t" style="z-index:0;left:2714.28px;top:26.00px;font-size:26.25px;line-height:34px;font-weight:normal;color:#4a4b4d;font-family:'Liberation Sans',sans-serif;">admin</div>
<div class="t" style="z-index:0;left:86.93px;top:141.86px;font-size:31.56px;line-height:41px;font-weight:normal;color:#0d1117;font-family:'Liberation Sans',sans-serif;">mspider-hosted</div>
<div class="t" style="z-index:0;left:53.25px;top:251.68px;font-size:26.30px;line-height:34px;font-weight:normal;color:#0d1117;font-family:'Liberation Sans',sans-serif;">Mesh Overview</div>
<div class="t" style="z-index:0;left:54.48px;top:343.78px;font-size:26.30px;line-height:34px;font-weight:normal;color:#0d1117;font-family:'Liberation Sans',sans-serif;">Service Manage...</div>
<div class="t" style="z-index:0;left:94.18px;top:436.18px;font-size:26.30px;line-height:34px;font-weight:normal;color:#0d1117;font-family:'Liberation Sans',sans-serif;">Service List</div>
<div class="t" style="z-index:0;left:94.18px;top:507.68px;font-size:26.30px;line-height:34px;font-weight:normal;color:#0d1117;font-family:'Liberation Sans',sans-serif;">Service Entry</div>
<div class="t" style="z-index:0;left:54.09px;top:599.48px;font-size:26.30px;line-height:34px;font-weight:normal;color:#0d2654;font-family:'Liberation Sans',sans-serif;">Traffic Managem...</div>
<div class="t" style="z-index:0;left:95.00px;top:691.98px;font-size:26.30px;line-height:34px;font-weight:normal;color:#0d1117;font-family:'Liberation Sans',sans-serif;">Virtual Service</div>
<div class="t" style="z-index:0;left:92.95px;top:764.18px;font-size:26.30px;line-height:34px;font-weight:normal;color:#0d1117;font-family:'Liberation Sans',sans-serif;">Destination Rule</div>
<div class="t" style="z-index:0;left:93.77px;top:835.88px;font-size:26.30px;line-height:34px;font-weight:normal;color:#0d2654;font-family:'Liberation Sans',sans-serif;">Gateway</div>
<div class="t" style="z-index:0;left:54.48px;top:927.58px;font-size:26.30px;line-height:34px;font-weight:normal;color:#0d1117;font-family:'Liberation Sans',sans-serif;">Security</div>
<div class="t" style="z-index:0;left:53.25px;top:1019.98px;font-size:26.30px;line-height:34px;font-weight:normal;color:#0d1117;font-family:'Liberation Sans',sans-serif;">Mesh Sidecar</div>
<div class="t" style="z-index:0;left:54.89px;top:1111.88px;font-size:26.30px;line-height:34px;font-weight:normal;color:#0d1117;font-family:'Liberation Sans',sans-serif;">Traffic Monitor</div>
<div class="t" style="z-index:0;left:53.25px;top:1204.28px;font-size:26.30px;line-height:34px;font-weight:normal;color:#0d1117;font-family:'Liberation Sans',sans-serif;">Mesh Cluster</div>
<div class="t" style="z-index:0;left:53.25px;top:1295.78px;font-size:26.30px;line-height:34px;font-weight:normal;color:#0d1117;font-family:'Liberation Sans',sans-serif;">Mesh Gateway</div>
<div class="t" style="z-index:0;left:53.25px;top:1388.18px;font-size:26.30px;line-height:34px;font-weight:normal;color:#0d1117;font-family:'Liberation Sans',sans-serif;">Mesh Config</div>
<div class="t" style="z-index:0;left:553.78px;top:134.60px;font-size:29.12px;line-height:38px;font-weight:bold;color:#0d1117;font-family:'Liberation Sans',sans-serif;">Mesh:</div>
<div class="t" style="z-index:0;left:656.87px;top:133.00px;font-size:30.86px;line-height:40px;font-weight:normal;color:#0d1117;font-family:'Liberation Sans',sans-serif;">mspider-hosted</div>
<div class="t" style="z-index:0;left:904.96px;top:137.41px;font-size:24.79px;line-height:32px;font-weight:normal;color:#0d1117;font-family:'Liberation Sans',sans-serif;">Hosted Mesh</div>
<div class="t" style="z-index:0;left:1085.80px;top:133.60px;font-size:30.00px;line-height:39px;font-weight:normal;color:#3a3a3a;font-family:'Liberation Sans',sans-serif;">/</div>
<div class="t" style="z-index:0;left:1115.00px;top:135.20px;font-size:28.84px;line-height:37px;font-weight:bold;color:#0d1117;font-family:'Liberation Sans',sans-serif;">Namespace</div>
<div class="t" style="z-index:0;left:1312.30px;top:136.95px;font-size:26.09px;line-height:34px;font-weight:normal;color:#0d1117;font-family:'Liberation Sans',sans-serif;">All Namespaces</div>
<div class="t" style="z-index:0;left:1635.30px;top:133.60px;font-size:30.00px;line-height:39px;font-weight:normal;color:#3a3a3a;font-family:'Liberation Sans',sans-serif;">/</div>
<div class="t" style="z-index:0;left:1664.59px;top:133.44px;font-size:30.16px;line-height:39px;font-weight:normal;color:#0d1117;font-family:'Liberation Sans',sans-serif;">Gateway</div>
<div class="t" style="z-index:0;left:533.77px;top:249.11px;font-size:24.20px;line-height:31px;font-weight:normal;color:#242424;font-family:'Liberation Sans',sans-serif;-webkit-text-stroke:0.75px #242424;letter-spacing:0.339px;">Gateway</div>
<div class="t" style="z-index:0;left:553.81px;top:459.56px;font-size:25.50px;line-height:33px;font-weight:bold;color:#333437;font-family:'Liberation Sans',sans-serif;">Name</div>
<div class="t" style="z-index:0;left:552.76px;top:534.48px;font-size:26.30px;line-height:34px;font-weight:normal;color:#0d1117;font-family:'Liberation Sans',sans-serif;">mkl</div>
<div class="t" style="z-index:0;left:552.76px;top:624.18px;font-size:26.30px;line-height:34px;font-weight:normal;color:#0d1117;font-family:'Liberation Sans',sans-serif;">hello</div>
<div class="t" style="z-index:0;left:553.58px;top:714.88px;font-size:26.30px;line-height:34px;font-weight:normal;color:#0d1117;font-family:'Liberation Sans',sans-serif;">cross-resource</div>
<div class="t" style="z-index:0;left:497.39px;top:798.78px;font-size:26.30px;line-height:34px;font-weight:normal;color:#3a3a3a;font-family:'Liberation Sans',sans-serif;">Total 3 records</div>
<div class="t" style="z-index:0;left:2408.58px;top:373.90px;font-size:25.95px;line-height:34px;font-weight:normal;color:#0e1014;font-family:'Liberation Sans',sans-serif;">Create by YAML</div>
<div class="t" style="z-index:0;left:2680.68px;top:373.89px;font-size:25.98px;line-height:34px;font-weight:normal;color:#4e586a;font-family:'Liberation Sans',sans-serif;">Create</div>
<div class="t" style="z-index:0;left:2353.96px;top:460.48px;font-size:24.30px;line-height:32px;font-weight:normal;color:#2c2d30;font-family:'Liberation Sans',sans-serif;-webkit-text-stroke:0.75px #2c2d30;letter-spacing:1.494px;">Create Time</div>
<div class="t" style="z-index:0;left:2353.98px;top:532.55px;font-size:28.11px;line-height:37px;font-weight:normal;color:#0d1117;font-family:'Liberation Sans',sans-serif;">2024-07-31 02:36</div>
<div class="t" style="z-index:0;left:2353.98px;top:622.57px;font-size:28.06px;line-height:36px;font-weight:normal;color:#0d1117;font-family:'Liberation Sans',sans-serif;">2024-07-09 13:20</div>
<div class="t" style="z-index:0;left:2353.98px;top:712.25px;font-size:28.11px;line-height:37px;font-weight:normal;color:#0d1117;font-family:'Liberation Sans',sans-serif;">2024-05-31 15:18</div>
<div class="t" style="z-index:0;left:2376.86px;top:798.08px;font-size:26.30px;line-height:34px;font-weight:normal;color:#3e3e3f;font-family:'Liberation Sans',sans-serif;">1</div>
<div class="t" style="z-index:0;left:2405.30px;top:797.41px;font-size:26.79px;line-height:35px;font-weight:normal;color:#2f3032;font-family:'Liberation Sans',sans-serif;">/ 1</div>
<div class="t" style="z-index:0;left:2585.95px;top:798.03px;font-size:26.46px;line-height:34px;font-weight:normal;color:#2f3032;font-family:'Liberation Sans',sans-serif;">10 per page</div>
<div class="t" style="z-index:20;left:673.91px;top:221.39px;font-size:30.60px;line-height:40px;font-weight:normal;color:#2f2f2f;font-family:'Liberation Sans',sans-serif;-webkit-text-stroke:0.75px #2f2f2f;letter-spacing:1.308px;">Edit Gateway Rule YAML</div>
<div class="t" style="z-index:20;left:1962.79px;top:1150.02px;font-size:25.90px;line-height:34px;font-weight:normal;color:#262626;font-family:'Liberation Sans',sans-serif;">Cancel</div>
<div class="t" style="z-index:20;left:2125.95px;top:1151.48px;font-size:24.58px;line-height:32px;font-weight:normal;color:#ffffff;font-family:'Liberation Sans',sans-serif;">OK</div>
</body></html>
